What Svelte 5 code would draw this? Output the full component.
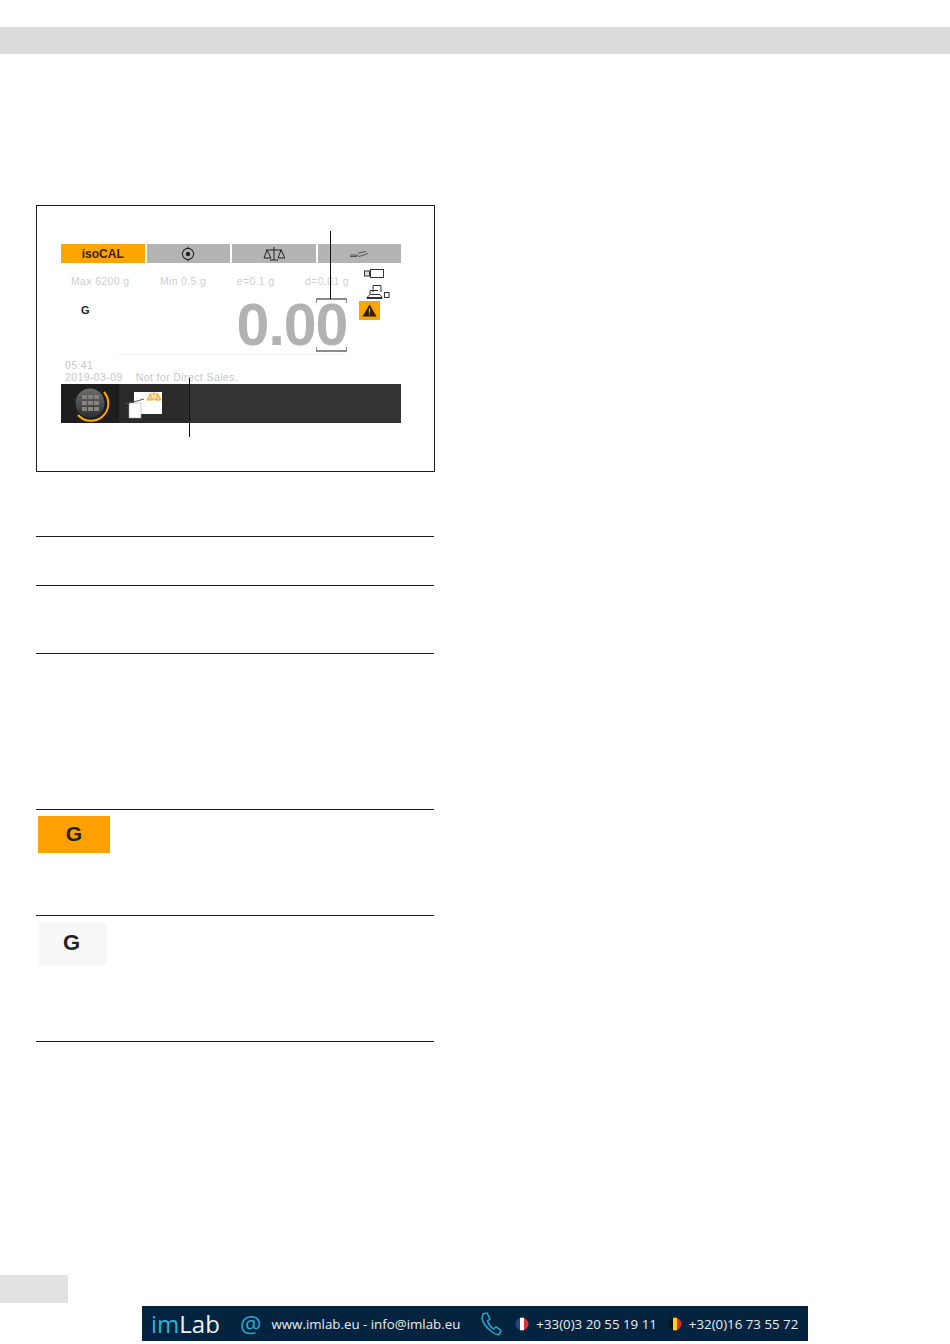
<script>
  const specs = ['Max 6200 g', 'Min 0.5 g', 'e=0.1 g', 'd=0.01 g'];
</script>

<div class="page">
  <div class="band"></div>

  <figure class="figure">
    <div class="screen">
      <div class="tabs">
        <div class="tab active">isoCAL</div>
        <div class="tab">
          <svg width="16" height="16" viewBox="0 0 16 16"><circle cx="8" cy="8" r="5.6" fill="none" stroke="#222" stroke-width="1.1"/><circle cx="8" cy="8" r="2.2" fill="#222"/><path d="M8 0.5v2M8 13.5v2" stroke="#222" stroke-width="0.8"/></svg>
        </div>
        <div class="tab">
          <svg width="22" height="16" viewBox="0 0 22 16"><path d="M11 1v13M7 14h8M3 4h16" stroke="#222" stroke-width="1" fill="none"/><path d="M4 4 1 12h7zM18 4l-3 8h7z" fill="none" stroke="#222" stroke-width="1"/></svg>
        </div>
        <div class="tab">
          <svg width="20" height="10" viewBox="0 0 20 10"><path d="M1 6h7l2 1.500 9-3M1 7.500h7M9 4l8-1.500" stroke="#555" stroke-width="1" fill="none"/></svg>
        </div>
      </div>

      <div class="specs">
        {#each specs as s}<span>{s}</span>{/each}
      </div>

      <div class="reading">
        <span class="mode">G</span>
        <span class="value">0.00</span>
        <div class="status">
          <svg class="ico-device" width="22" height="11" viewBox="0 0 22 11"><rect x="7.5" y="1.5" width="13" height="8" fill="#fff" stroke="#333"/><rect x="1.5" y="3" width="5" height="5" fill="#ddd" stroke="#333"/></svg>
          <svg class="ico-net" width="24" height="16" viewBox="0 0 24 16"><path d="M7 8V1.5h8V8M4 6.5h8M4 6.5v4M1 13.5l3-3h10l2 3zM1 13.5v1h15v-1" fill="none" stroke="#333"/><rect x="18.5" y="8.5" width="4.5" height="5" fill="none" stroke="#333"/></svg>
          <div class="warn">
            <svg width="15" height="13" viewBox="0 0 14 12"><path d="M7 0.5 13.6 11.5H0.4z" fill="#2a1c10"/><path d="M7 4v4M7 9v1.3" stroke="#ffa000" stroke-width="1.2"/></svg>
          </div>
        </div>
      </div>

      <div class="hair"></div>

      <div class="meta">
        <div>05:41</div>
        <div class="meta-row"><span>2019-03-09</span><span>Not for Direct Sales.</span></div>
      </div>

      <div class="bar">
        <div class="menu-cell">
          <svg width="40" height="38" viewBox="0 0 40 38">
            <defs><linearGradient id="orb" x1="0" y1="0" x2="0" y2="1"><stop offset="0" stop-color="#6b6d70"/><stop offset="1" stop-color="#2f3033"/></linearGradient></defs>
            <circle cx="20" cy="18" r="14.5" fill="url(#orb)"/>
            <g fill="#85827c">
              <rect x="12" y="10" width="5" height="4"/><rect x="18" y="10" width="5" height="4"/><rect x="24" y="10" width="5" height="4"/>
              <rect x="12" y="16" width="5" height="4"/><rect x="18" y="16" width="5" height="4"/><rect x="24" y="16" width="5" height="4"/>
              <rect x="12" y="22" width="5" height="4"/><rect x="18" y="22" width="5" height="4"/><rect x="24" y="22" width="5" height="4"/>
            </g>
            <path d="M34 7a16.500 16.500 0 0 1-26 23" fill="none" stroke="#ffa800" stroke-width="2"/>
          </svg>
        </div>
        <div class="app-cell">
          <svg width="48" height="32" viewBox="0 0 48 32">
            <rect x="14" y="1" width="28" height="22" fill="#fff"/>
            <rect x="9" y="12" width="12" height="15" fill="#fff" stroke="#999" stroke-width="0.5"/>
            <path d="M5 13l12-3M17 10l7-2" stroke="#555" stroke-width="1"/>
            <path d="M34 1v8M30 3h8M30 3l-3 6h6zM38 3l-3 6h6z" stroke="#f5a623" stroke-width="1" fill="#ffd079"/>
          </svg>
        </div>
      </div>
    </div>

    <span class="bracket top"></span>
    <span class="bracket bottom"></span>
    <span class="callout upper"></span>
    <span class="callout lower"></span>
  </figure>

  <div class="rows">
    <div class="row h49"></div>
    <div class="row h68"></div>
    <div class="row h156"></div>
    <div class="row h106"><div class="key orange">G</div></div>
    <div class="row h126"><div class="key light">G</div></div>
  </div>

  <div class="tag"></div>

  <footer class="banner">
    <span class="logo"><b>im</b>Lab</span>
    <span class="at">@</span>
    <span class="web">www.imlab.eu - info@imlab.eu</span>
    <svg class="phone" width="22" height="24" viewBox="0 0 22 24"><path d="M3 2 7 1l3 6-2.500 2c1 3 3 6 6 8l2.500-2 5 3.500-1.500 3.500c-2 1-5 0-8-2.500C7 16 3 11 2 6.500z" fill="none" stroke="#2aa7c9" stroke-width="1.500"/></svg>
    <svg class="flag" width="14" height="14" viewBox="0 0 14 14"><clipPath id="c1"><circle cx="7" cy="7" r="6.500"/></clipPath><g clip-path="url(#c1)"><rect width="5" height="14" fill="#27408f"/><rect x="5" width="4" height="14" fill="#fff"/><rect x="9" width="5" height="14" fill="#e0303c"/></g></svg>
    <span class="tel">+33(0)3 20 55 19 11</span>
    <svg class="flag second" width="14" height="14" viewBox="0 0 14 14"><clipPath id="c2"><circle cx="7" cy="7" r="6.500"/></clipPath><g clip-path="url(#c2)"><rect width="5" height="14" fill="#111"/><rect x="5" width="4" height="14" fill="#f8d210"/><rect x="9" width="5" height="14" fill="#dc2a2a"/></g></svg>
    <span class="tel">+32(0)16 73 55 72</span>
  </footer>
</div>

<style>
  :global(body) { margin: 0; background: #fff; }
  .page { width: 950px; height: 1344px; overflow: hidden; font-family: "Liberation Sans", Arial, sans-serif; display: flex; flex-direction: column; }
  .band { height: 27px; margin-top: 27px; background: #dcdcdc; flex: none; }

  .figure { position: relative; box-sizing: border-box; flex: none; width: 399px; height: 267px; margin: 151px 0 0 36px; border: 1px solid #1c1c1c; padding: 38px 0 0 24px; }
  .screen { width: 340px; display: flex; flex-direction: column; }
  .tabs { display: flex; gap: 2px; height: 19px; }
  .tab { flex: 1; background: #b4b4b4; display: flex; align-items: center; justify-content: center; }
  .tab.active { background: #ffa500; color: #3a2000; font-weight: bold; font-size: 12px; }
  .specs { height: 38px; box-sizing: border-box; padding: 12px 0 0 10px; display: flex; font-size: 10.500px; letter-spacing: 0.350px; color: #cfcfcf; width: 288px; justify-content: space-between; }
  .reading { display: flex; height: 48px; position: relative; }
  .mode { font-size: 11px; font-weight: bold; color: #222; margin: 0 0 0 20px; line-height: 18px; }
  .value { font-size: 59px; font-weight: bold; color: #b2b2b2; letter-spacing: -1px; line-height: 48px; margin-left: 147px; }
  .status { position: absolute; left: 298px; top: -33px; width: 40px; display: flex; flex-direction: column; }
  .ico-device { margin: 0 0 0 4px; }
  .ico-net { margin: 5px 0 0 7px; }
  .warn { width: 21px; height: 19px; margin-top: 1px; background: #ffa500; display: flex; align-items: center; justify-content: center; }
  .hair { height: 1px; margin: 5px 56px 0 58px; background: #eef0f2; }
  .meta { font-size: 10.500px; color: #c6c6c6; letter-spacing: 0.400px; line-height: 12px; margin: 4px 0 0 4px; height: 25px; }
  .meta-row { display: flex; gap: 13px; }
  .bar { height: 39px; background: #333; display: flex; }
  .menu-cell { width: 58px; background: #1e1e1e; display: flex; align-items: center; justify-content: center; }
  .app-cell { width: 69px; background: #2a2a2a; display: flex; align-items: flex-start; padding: 7px 0 0 1px; box-sizing: border-box; }

  .bracket { position: absolute; left: 279px; width: 29px; height: 3px; border: 0 solid #8a8a8a; border-width: 2px 1px 0; }
  .bracket.top { top: 92px; }
  .bracket.bottom { top: 141px; border-width: 0 1px 2px; }
  .callout { position: absolute; width: 1.500px; background: #111; }
  .callout.upper { left: 292.500px; top: 25px; height: 68px; }
  .callout.lower { left: 151.500px; top: 172px; height: 59px; }

  .rows { width: 398px; margin: 64px 0 0 36px; border-top: 1px solid #1c1c1c; flex: none; }
  .row { box-sizing: border-box; border-bottom: 1px solid #1c1c1c; }
  .h49 { height: 49px; }
  .h68 { height: 68px; }
  .h156 { height: 156px; }
  .h106 { height: 106px; padding: 6px 0 0 2px; }
  .h126 { height: 126px; padding: 6px 0 0 3px; }
  .key { display: flex; justify-content: center; font-weight: bold; font-size: 21px; color: #222; }
  .orange { width: 72px; height: 37px; background: #ffa000; align-items: flex-start; padding-top: 6px; box-sizing: border-box; }
  .light { width: 68px; height: 44px; background: #f8f8f8; align-items: flex-start; padding: 8px 3px 0 0; box-sizing: border-box; font-size: 22px; }

  .tag { flex: none; width: 68px; height: 28px; margin-top: 233px; background: #e2e2e2; }

  .banner { flex: none; box-sizing: border-box; width: 666px; height: 35px; margin: 3px 0 0 142px; background: #04233f; display: flex; align-items: center; color: #e8eef2; font-family: "Open Sans", sans-serif; font-size: 13.300px; white-space: nowrap; }
  .logo { font-size: 24px; margin-left: 9px; color: #eef4f8; font-weight: 400; width: 71px; line-height: 1; }
  .logo b { color: #29b6d8; font-weight: 400; }
  .at { color: #2aa7c9; font-size: 24px; margin-left: 18px; line-height: 1; }
  .web { margin-left: 10px; }
  .phone { margin-left: 20px; }
  .flag { margin: 0 7px 0 13px; }
  .flag.second { margin-left: 11px; }
</style>
